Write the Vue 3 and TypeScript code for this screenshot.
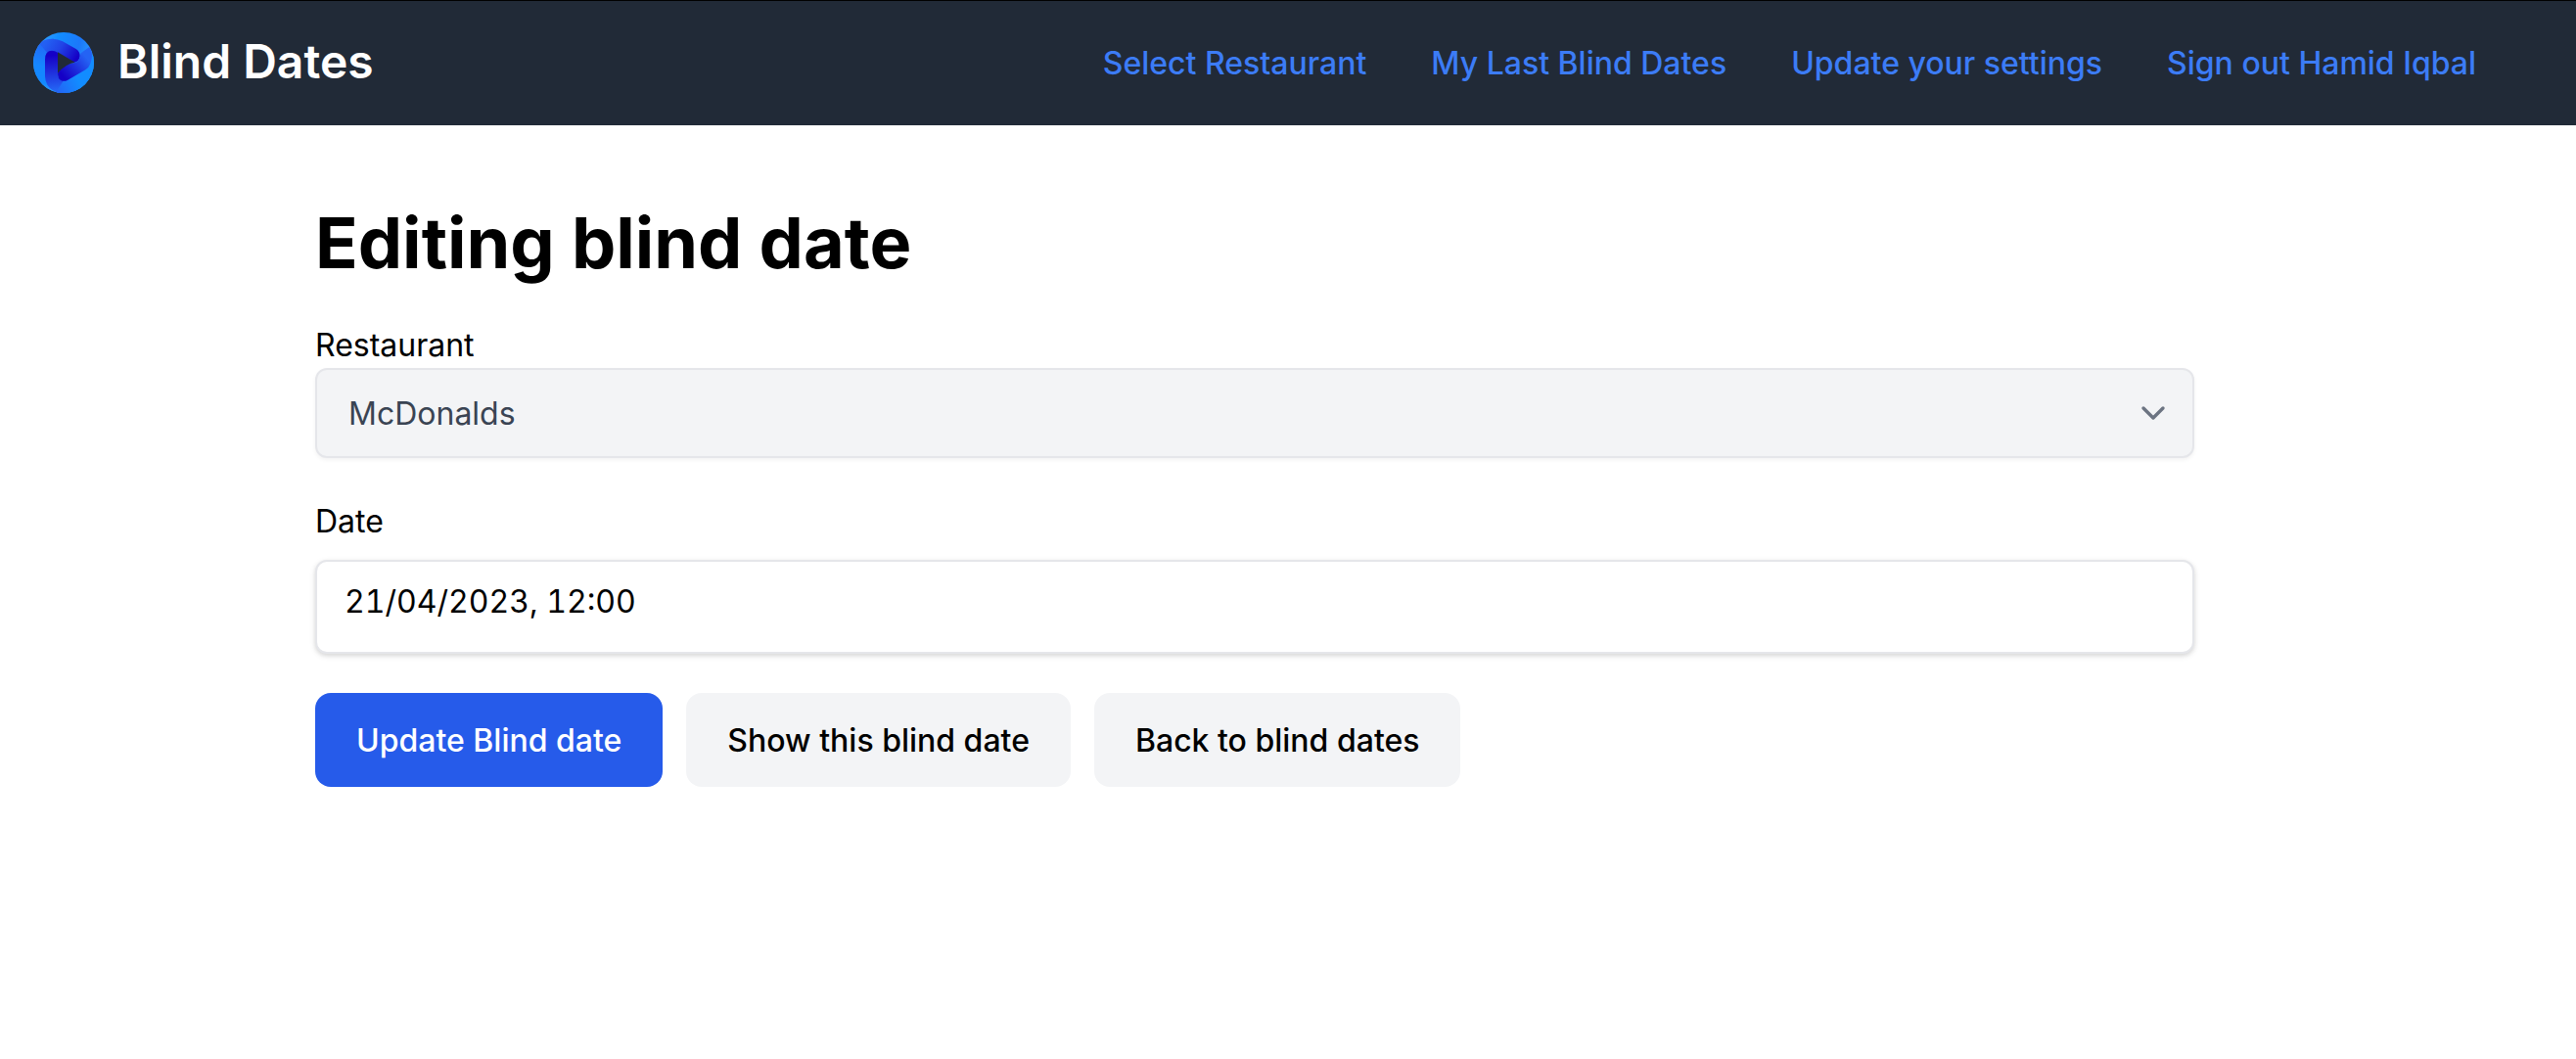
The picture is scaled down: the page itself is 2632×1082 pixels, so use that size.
<script setup lang="ts">
import { ref } from 'vue'

interface NavLink {
  label: string
  href: string
}

const links: NavLink[] = [
  { label: 'Select Restaurant', href: '#restaurants' },
  { label: 'My Last Blind Dates', href: '#blind-dates' },
  { label: 'Update your settings', href: '#settings' },
]

const restaurant = ref('McDonalds')
const date = ref('21/04/2023, 12:00')
</script>

<template>
  <header class="topbar">
    <a class="brand" href="#home">
      <svg class="logo" viewBox="36 36 192 192" aria-hidden="true">
        <defs>
          <linearGradient id="ring" x1="0" y1="0" x2="1" y2="0.3">
            <stop offset="0" stop-color="#45a8ff" />
            <stop offset="0.4" stop-color="#128cff" />
            <stop offset="0.75" stop-color="#1b78fa" />
            <stop offset="1" stop-color="#2a9bff" />
          </linearGradient>
          <linearGradient id="side" x1="0.3" y1="0" x2="0.2" y2="1">
            <stop offset="0" stop-color="#2463f4" />
            <stop offset="0.5" stop-color="#1587ff" />
            <stop offset="0.8" stop-color="#1289ff" />
            <stop offset="1" stop-color="#45a8ff" />
          </linearGradient>
          <linearGradient id="upper" gradientUnits="userSpaceOnUse" x1="80" y1="70" x2="170" y2="125">
            <stop offset="0" stop-color="#2360f3" />
            <stop offset="0.45" stop-color="#2143e6" />
            <stop offset="1" stop-color="#1500c6" />
          </linearGradient>
          <linearGradient id="stem" gradientUnits="userSpaceOnUse" x1="105" y1="110" x2="112" y2="215">
            <stop offset="0" stop-color="#1500c6" />
            <stop offset="0.35" stop-color="#1d22d6" />
            <stop offset="1" stop-color="#2463f4" />
          </linearGradient>
          <linearGradient id="base" gradientUnits="userSpaceOnUse" x1="110" y1="215" x2="195" y2="175">
            <stop offset="0" stop-color="#2463f4" />
            <stop offset="0.8" stop-color="#128cff" />
            <stop offset="1" stop-color="#128cff" />
          </linearGradient>
          <linearGradient id="lower" gradientUnits="userSpaceOnUse" x1="135" y1="175" x2="212" y2="110">
            <stop offset="0" stop-color="#1500c6" />
            <stop offset="0.45" stop-color="#1d2fdc" />
            <stop offset="0.9" stop-color="#2463f4" />
          </linearGradient>
          <clipPath id="disc"><circle cx="135" cy="132" r="93" /></clipPath>
        </defs>
        <g clip-path="url(#disc)">
          <rect x="42" y="39" width="186" height="186" fill="url(#ring)" />
          <path d="M42 95C52 70 76 59 104 59L120 98V225H108C60 213 42 175 42 130Z" fill="url(#side)" />
          <path d="M150 182L222 110H228V225H110V188Z" fill="url(#base)" />
          <path d="M62 75C72 64 86 59 102 59Q117 59 132 67L173 90Q186 99 185 113Q182 130 166 131L117 101Q98 89 84 101Z" fill="url(#upper)" />
          <path d="M78 122Q78 95 99 95Q109 95 117 101V165Q117 188 134 188Q142 188 150 183L168 204Q148 224 128 224Q98 222 85 200Q78 188 78 174Z" fill="url(#stem)" />
          <path d="M134 188L150 183L205 153L228 170V225H110Z" fill="url(#base)" />
          <path d="M215 83C224 98 224 115 217 135Q213 147 202 154L148 185Q137 191 127 187Q117 182 117 164C125 151 135 141 150 136Q158 134 170 132Q183 128 185 113L188 103Z" fill="url(#lower)" />
        </g>
        <path d="M117 100L170 131Q140 136 117 164Z" fill="#212a37" />
      </svg>
      <span class="brand-name">Blind Dates</span>
    </a>
    <nav class="nav">
      <a v-for="link in links" :key="link.href" class="nav-item" :href="link.href">{{ link.label }}</a>
      <button class="nav-item" type="button">Sign out Hamid Iqbal</button>
    </nav>
  </header>

  <main class="page">
    <h1 class="title">Editing blind date</h1>
    <form @submit.prevent>
      <label class="label" for="restaurant">Restaurant</label>
      <div class="select-wrap">
        <select id="restaurant" v-model="restaurant" class="control select">
          <option>McDonalds</option>
        </select>
        <svg class="chevron" viewBox="0 0 20 20" aria-hidden="true">
          <path d="M5 7.5l5 5 5-5" />
        </svg>
      </div>
      <label class="label date-label" for="date">Date</label>
      <input id="date" v-model="date" class="control date" type="text" />
      <div class="actions">
        <button class="btn primary" type="submit">Update Blind date</button>
        <a class="btn" href="#show">Show this blind date</a>
        <a class="btn" href="#blind-dates">Back to blind dates</a>
      </div>
    </form>
  </main>
</template>

<style>
body {
  background: #fff;
  color: #000;
  font-family: Inter, sans-serif;
  font-size: 32px;
  line-height: 48px;
}
</style>

<style scoped>
.topbar {
  box-sizing: border-box;
  min-height: 128px;
  padding: 0 102px 0 32px;
  display: flex;
  align-items: center;
  justify-content: space-between;
  background: #212a37;
  box-shadow: inset 0 1px 0 #000;
}
.brand {
  display: flex;
  align-items: center;
  gap: 24px;
  color: #fff;
  text-decoration: none;
}
.logo {
  width: 64px;
  height: 64px;
}
.brand-name {
  font-size: 48px;
  font-weight: 600;
  line-height: 48px;
  padding-bottom: 2px;
  white-space: nowrap;
}
.nav {
  display: flex;
  gap: 66px;
}
.nav-item {
  padding: 2px 0 0;
  border: 0;
  background: none;
  color: #3c7cf6;
  font: inherit;
  font-weight: 500;
  text-decoration: none;
  white-space: nowrap;
  cursor: pointer;
}
.page {
  box-sizing: border-box;
  max-width: 2560px;
  margin: 0 auto;
  padding: 80px 354px 0 286px;
}
.title {
  margin: 0 0 42px;
  font-size: 72px;
  font-weight: 700;
  line-height: 80px;
}
.label {
  display: block;
  line-height: 46px;
}
.control {
  box-sizing: border-box;
  display: block;
  width: 100%;
  margin: 0;
  border: 2px solid #e5e6ea;
  border-radius: 12px;
  font: inherit;
}
.select-wrap {
  position: relative;
}
.select {
  height: 92px;
  padding: 2px 80px 0 32px;
  appearance: none;
  background: #f3f4f6;
  color: #3a4453;
  box-shadow: 0 2px 4px rgba(0, 0, 0, 0.05);
}
.chevron {
  position: absolute;
  top: 26px;
  right: 22px;
  width: 40px;
  height: 40px;
  fill: none;
  stroke: #6c7482;
  stroke-width: 1.7;
  stroke-linecap: round;
  stroke-linejoin: round;
  pointer-events: none;
}
.date-label {
  margin: 42px 0 16px;
}
.date {
  height: 96px;
  padding: 0 28px 12px;
  background: #fff;
  color: #000;
  font-variant-numeric: tabular-nums;
  box-shadow: 0 2px 6px rgba(0, 0, 0, 0.1), 0 2px 4px rgba(0, 0, 0, 0.08);
}
.actions {
  display: flex;
  flex-wrap: wrap;
  gap: 24px;
  margin-top: 40px;
}
.btn {
  padding: 25px 42px 23px;
  border: 0;
  border-radius: 16px;
  background: #f3f4f6;
  color: #000;
  font: inherit;
  font-weight: 500;
  text-decoration: none;
  cursor: pointer;
}
.primary {
  background: #265bea;
  color: #fff;
}
</style>
